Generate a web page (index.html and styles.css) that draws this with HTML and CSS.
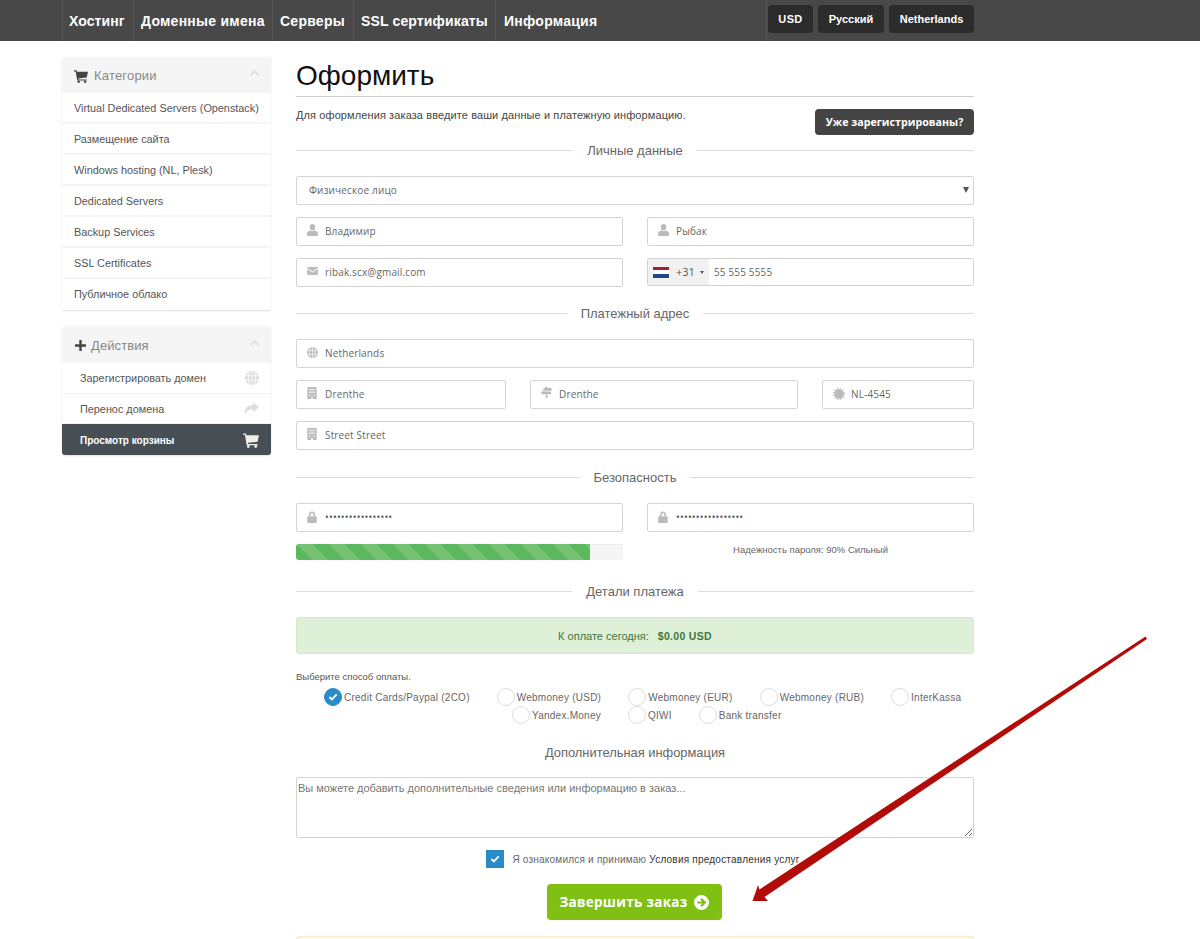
FILE: index.html
```html
<!DOCTYPE html>
<html lang="ru">
<head>
<meta charset="utf-8">
<title>Оформить</title>
<link rel="stylesheet" href="styles.css">
</head>
<body>
<svg class="defs" width="0" height="0">
  <symbol id="i-cart" viewBox="0 0 16 16"><path d="M0 1.5h2.9l.5 1.7H16l-1.5 6.6-9.6 1 .3 1.1H14.600v1.300H3.700L1.900 2.800H0z"/><circle cx="5.300" cy="14.500" r="1.400"/><circle cx="12.700" cy="14.500" r="1.400"/></symbol>
  <symbol id="i-plus" viewBox="0 0 12 12"><path d="M4.700 0h2.600v4.700H12v2.600H7.300V12H4.700V7.300H0V4.700h4.700z"/></symbol>
  <symbol id="i-chev" viewBox="0 0 14 9"><path d="M1.500 7.500L7 2l5.500 5.500" fill="none" stroke="currentColor" stroke-width="2.600"/></symbol>
  <symbol id="i-globe" viewBox="0 0 14 14"><circle cx="7" cy="7" r="7"/><path d="M0 4.700h14M0 9.300h14M7 0v14M4.500 .5C3 4.500 3 9.500 4.500 13.500M9.500 .5C11 4.500 11 9.500 9.500 13.500" fill="none" stroke="#fff" stroke-width=".8"/></symbol>
  <symbol id="i-share" viewBox="0 0 16 14"><path d="M9.500 0L16 5.500 9.500 11V7.800C5.500 7.800 2.500 9 1 14 -.5 7.500 3.500 3.500 9.500 3.300z"/></symbol>
  <symbol id="i-user" viewBox="0 0 12 13"><ellipse cx="6" cy="3.500" rx="3" ry="3.500"/><path d="M0 13v-2.500C0 8.300 2 7.500 3.500 7c1.500 1 3.500 1 5 0 1.500.5 3.500 1.300 3.500 3.500V13z"/></symbol>
  <symbol id="i-mail" viewBox="0 0 12 9"><path d="M0 0h12v1L6 5 0 1zM0 2.300L6 6.300l6-4V9H0z"/></symbol>
  <symbol id="i-build" viewBox="0 0 10 13"><path fill-rule="evenodd" d="M0 0h10v13H6v-2H4v2H0zM2 2v1.500h1.500V2zM4.300 2v1.500h1.500V2zM6.600 2v1.500H8V2zM2 5v1.500h1.500V5zM4.300 5v1.500h1.500V5zM6.600 5v1.500H8V5zM2 8v1.500h1.500V8zM6.600 8v1.500H8V8z"/></symbol>
  <symbol id="i-signs" viewBox="0 0 12 12"><path d="M5 0h2v1h4l1 1.500L11 4H1zM1 5h10v3H1L0 6.500zM5 8.500h2V12H5z"/></symbol>
  <symbol id="i-cert" viewBox="0 0 14 14"><circle cx="7" cy="7" r="5.500"/><circle cx="7" cy="7" r="6" fill="none" stroke="currentColor" stroke-width="2" stroke-dasharray="1.600 1.540"/></symbol>
  <symbol id="i-lock" viewBox="0 0 11 14"><path d="M3 6V4a2.500 2.500 0 015 0v2" fill="none" stroke="currentColor" stroke-width="1.800"/><rect y="6" width="11" height="8" rx="1"/></symbol>
  <symbol id="i-check" viewBox="0 0 12 10"><path d="M1.500 5L4.600 8l6-6.200" fill="none" stroke="#fff" stroke-width="2.200"/></symbol>
  <symbol id="i-next" viewBox="0 0 14 14"><path fill-rule="evenodd" d="M7 0a7 7 0 110 14A7 7 0 017 0zM7.300 2.800L5.900 4.200 7.700 6H3v2h4.700L5.900 9.800l1.400 1.400L11.500 7z"/></symbol>
</svg>

<header class="topbar">
  <nav class="topnav">
    <a class="nav-item nav-a">Хостинг</a>
    <a class="nav-item nav-b">Доменные имена</a>
    <a class="nav-item nav-c">Серверы</a>
    <a class="nav-item nav-d">SSL сертификаты</a>
    <a class="nav-item nav-e">Информация</a>
    <div class="nav-tools">
      <a class="tool tool-a">USD</a>
      <a class="tool tool-b">Русский</a>
      <a class="tool tool-c">Netherlands</a>
    </div>
  </nav>
</header>

<div class="page">
  <aside class="sidebar">
    <section class="panel panel-cats">
      <h3 class="panel-head"><svg class="ph-icon"><use href="#i-cart"/></svg><span>Категории</span><svg class="chev"><use href="#i-chev"/></svg></h3>
      <a class="cat">Virtual Dedicated Servers (Openstack)</a>
      <a class="cat">Размещение сайта</a>
      <a class="cat">Windows hosting (NL, Plesk)</a>
      <a class="cat">Dedicated Servers</a>
      <a class="cat">Backup Services</a>
      <a class="cat">SSL Certificates</a>
      <a class="cat cat-last">Публичное облако</a>
    </section>
    <section class="panel panel-acts">
      <h3 class="panel-head head-acts"><svg class="ph-plus"><use href="#i-plus"/></svg><span>Действия</span><svg class="chev"><use href="#i-chev"/></svg></h3>
      <a class="act">Зарегистрировать домен<svg class="act-icon"><use href="#i-globe"/></svg></a>
      <a class="act">Перенос домена<svg class="act-icon act-share"><use href="#i-share"/></svg></a>
      <a class="act act-on">Просмотр корзины<svg class="act-icon act-cart"><use href="#i-cart"/></svg></a>
    </section>
  </aside>

  <main class="main">
    <h1 class="title">Оформить</h1>
    <div class="intro">
      <p>Для оформления заказа введите ваши данные и платежную информацию.</p>
      <a class="btn-login">Уже зарегистрированы?</a>
    </div>

    <h4 class="sub sub-1"><span>Личные данные</span></h4>
    <div class="select-wrap">
      <select class="field field-select"><option>Физическое лицо</option></select>
    </div>
    <div class="row two">
      <label class="inp"><svg class="fi fi-user"><use href="#i-user"/></svg><input class="field" value="Владимир"></label>
      <label class="inp"><svg class="fi fi-user"><use href="#i-user"/></svg><input class="field" value="Рыбак"></label>
    </div>
    <div class="row two">
      <label class="inp"><svg class="fi fi-mail"><use href="#i-mail"/></svg><input class="field" value="ribak.scx@gmail.com"></label>
      <div class="phone">
        <div class="dial"><span class="flag"><i class="f-r"></i><i class="f-w"></i><i class="f-b"></i></span><span class="code">+31</span><span class="caret"></span></div>
        <input class="phone-input" value="55 555 5555">
      </div>
    </div>

    <h4 class="sub sub-2"><span>Платежный адрес</span></h4>
    <label class="inp"><svg class="fi fi-globe"><use href="#i-globe"/></svg><input class="field" value="Netherlands"></label>
    <div class="row three">
      <label class="inp"><svg class="fi fi-build"><use href="#i-build"/></svg><input class="field" value="Drenthe"></label>
      <label class="inp"><svg class="fi fi-signs"><use href="#i-signs"/></svg><input class="field" value="Drenthe"></label>
      <label class="inp"><svg class="fi fi-cert"><use href="#i-cert"/></svg><input class="field" value="NL-4545"></label>
    </div>
    <label class="inp row"><svg class="fi fi-build"><use href="#i-build"/></svg><input class="field" value="Street Street"></label>

    <h4 class="sub sub-3"><span>Безопасность</span></h4>
    <div class="row two">
      <label class="inp"><svg class="fi fi-lock"><use href="#i-lock"/></svg><input class="field pass" type="password" value="passwordpassword1"></label>
      <label class="inp"><svg class="fi fi-lock"><use href="#i-lock"/></svg><input class="field pass" type="password" value="passwordpassword1"></label>
    </div>
    <div class="row two strength">
      <div class="progress"><div class="bar" style="width:90%"></div></div>
      <p class="strength-text">Надежность пароля: 90% Сильный</p>
    </div>

    <h4 class="sub sub-4"><span>Детали платежа</span></h4>
    <div class="alert-pay">К оплате сегодня: <b>$0.00 USD</b></div>

    <p class="pay-label">Выберите способ оплаты.</p>
    <div class="pay-row pay-row-1">
      <label class="pay"><span class="radio radio-on"><svg class="radio-check"><use href="#i-check"/></svg></span>Credit Cards/Paypal (2CO)</label>
      <label class="pay"><span class="radio"></span>Webmoney (USD)</label>
      <label class="pay"><span class="radio"></span>Webmoney (EUR)</label>
      <label class="pay"><span class="radio"></span>Webmoney (RUB)</label>
      <label class="pay"><span class="radio"></span>InterKassa</label>
    </div>
    <div class="pay-row pay-row-2">
      <label class="pay"><span class="radio"></span>Yandex.Money</label>
      <label class="pay"><span class="radio"></span>QIWI</label>
      <label class="pay"><span class="radio"></span>Bank transfer</label>
    </div>

    <h4 class="extra">Дополнительная информация</h4>
    <textarea class="notes" placeholder="Вы можете добавить дополнительные сведения или информацию в заказ..."></textarea>

    <div class="tos">
      <span class="tick"><svg class="tick-check"><use href="#i-check"/></svg></span>
      <span>Я ознакомился и принимаю <a class="tos-link">Условия предоставления услуг</a></span>
    </div>
    <div class="finish"><a class="btn-finish">Завершить заказ<svg class="next"><use href="#i-next"/></svg></a></div>
    <div class="warn"></div>
  </main>
</div>

<svg class="annot" viewBox="0 0 1200 939" width="1200" height="939">
  <polygon points="1145.500,636.500 759.500,889.500 758,885 752.500,901 768,901 764.500,897 1147,639" fill="#b20c08"/>
</svg>
</body>
</html>
```
FILE: styles.css
```css
* { box-sizing: border-box; }
html, body { margin: 0; padding: 0; height: 939px; overflow: hidden; background: #fff; }
body { font-family: "Liberation Sans", Arial, sans-serif; color: #333; position: relative; }
.defs { position: absolute; }
svg { fill: currentColor; display: block; }

.topbar { height: 41px; background: #484848; }
.topnav { margin-left: 62px; width: 912px; height: 41px; display: flex; }
.nav-item { height: 41px; line-height: 42px; font-weight: 700; font-size: 14px; color: #fff; border-left: 1px solid #555; letter-spacing: .1px; white-space: nowrap; }
.nav-a { width: 71px; padding-left: 6px; }
.nav-b { width: 139px; padding-left: 7px; letter-spacing: .25px; }
.nav-c { width: 81px; padding-left: 7px; letter-spacing: .25px; }
.nav-d { width: 142px; padding-left: 7px; letter-spacing: .15px; }
.nav-e { padding-left: 8px; letter-spacing: .25px; }
.nav-tools { margin-left: auto; display: flex; gap: 5px; border-left: 1px solid #555; padding: 5px 0 0 1px; height: 41px; }
.tool { height: 28px; background: #2c2c2c; border-radius: 4px; color: #fff; font-weight: 700; font-size: 11px; line-height: 28px; text-align: center; }
.tool-a { width: 45px; letter-spacing: .4px; }
.tool-b { width: 66px; }
.tool-c { width: 85px; }

.page { display: flex; padding: 16px 0 0 62px; }
.sidebar { width: 209px; flex: none; margin-right: 25px; }
.panel { border-radius: 3px; box-shadow: 0 1px 2px rgba(0,0,0,.13); background: #fff; overflow: hidden; }
.panel-cats { height: 253px; }
.panel-acts { margin-top: 16px; height: 129px; }
.panel-head { margin: 0; height: 36px; background: #f5f5f5; display: flex; align-items: center; padding: 1px 11px 0 12px; font-weight: 400; font-size: 13px; color: #888; letter-spacing: .2px; }
.head-acts { height: 37px; letter-spacing: .1px; }
.ph-icon { width: 14px; height: 14px; color: #444; margin-right: 6px; }
.ph-plus { width: 11px; height: 11px; color: #444; margin-right: 5px; margin-left: 1px; }
.chev { width: 11px; height: 8px; color: #e0e0e0; margin-left: auto; margin-top: -5px; }
.cat { display: block; height: 31px; padding: 0 12px; line-height: 31px; font-size: 10.85px; color: #555; border-bottom: 2px solid #f4f4f4; white-space: nowrap; }
.cat-last { border-bottom: 0; }
.act { height: 31px; padding: 0 12px 0 18px; font-size: 10.85px; color: #555; display: flex; align-items: center; justify-content: space-between; border-bottom: 1px solid #f2f2f2; }
.act:nth-of-type(2) { height: 30px; }
.act-icon { width: 14px; height: 14px; color: #ddd; }
.act-share { height: 13px; width: 15px; }
.act-on { background: #484f54; color: #fff; font-weight: 700; border-bottom: 0; font-size: 10px; padding-top: 1px; }
.act-cart { color: #eee; width: 16px; height: 16px; }

.main { width: 678px; flex: none; font-size: 11px; margin-top: -1px; }
.title { margin: 0; height: 41px; border-bottom: 1px solid #ccc; font-family: "Liberation Sans", sans-serif; font-weight: 400; font-size: 28px; line-height: 40px; color: #111; }
.intro { display: flex; justify-content: space-between; align-items: flex-start; height: 38px; padding-top: 12px; }
.intro p { margin: 0; font-size: 11px; line-height: 13px; color: #444; letter-spacing: .1px; }
.btn-login { width: 159px; height: 26px; background: #444; color: #fff; border-radius: 4px; font-family: "Open Sans", sans-serif; font-weight: 700; font-size: 10.7px; line-height: 26px; text-align: center; }

.sub { margin: 0; display: flex; align-items: center; font-weight: 400; font-size: 13px; color: #666; height: 15px; }
.sub::before, .sub::after { content: ""; flex: 1; height: 1px; background: #ddd; }
.sub span { padding: 0 14px; }
.sub-1 { margin-top: 8px; margin-bottom: 18px; }
.sub-2 { margin-top: 19px; margin-bottom: 18px; }
.sub-3 { margin-top: 20px; margin-bottom: 18px; }
.sub-4 { margin-top: 24px; margin-bottom: 18px; }

.row { display: grid; gap: 24px; margin-top: 12px; }
.row.inp { display: block; }
.two { grid-template-columns: 1fr 1fr; }
.three { grid-template-columns: 210fr 268fr 152fr; }
.inp { position: relative; display: block; height: 29px; }
.field { display: block; width: 100%; height: 29px; border: 1px solid #d4d4d4; border-radius: 2px; padding: 0 6px 1px 28px; background: #fff; font-family: "Open Sans", sans-serif; font-size: 10px; letter-spacing: .15px; color: #666; outline: 0; }
.field-select { appearance: none; -webkit-appearance: none; padding-left: 12px; }
.select-wrap { position: relative; }
.select-wrap::after { content: ""; position: absolute; right: 5px; top: 11px; border-left: 3px solid transparent; border-right: 3px solid transparent; border-top: 6px solid #555; }
.pass { color: #555; font-size: 10px; letter-spacing: .2px; }
.fi { position: absolute; top: 8px; left: 11px; color: #bbb; }
.fi-user { width: 11px; height: 12px; top: 7px; }
.fi-mail { width: 11px; height: 8px; top: 9px; }
.fi-globe { width: 11px; height: 11px; top: 8px; }
.fi-build { width: 10px; height: 12px; left: 11px; top: 7px; }
.fi-signs { width: 11px; height: 11px; top: 7px; }
.fi-cert { width: 12px; height: 12px; }
.fi-lock { width: 10px; height: 12px; top: 8px; }

.phone { display: flex; height: 28px; border: 1px solid #d4d4d4; border-radius: 2px; overflow: hidden; }
.dial { width: 61px; background: #f1f1f1; display: flex; align-items: center; padding: 0 5px; flex: none; }
.flag { width: 16px; height: 11px; display: flex; flex-direction: column; margin-right: 7px; }
.flag i { display: block; flex: 1; }
.f-r { background: #ae1c28; } .f-w { background: #fff; } .f-b { background: #21468b; }
.code { font-family: "Open Sans", sans-serif; font-size: 11px; color: #555; margin-top: -2px; }
.caret { margin-left: 5px; border-left: 2.500px solid transparent; border-right: 2.500px solid transparent; border-top: 3px solid #555; }
.phone-input { flex: 1; min-width: 0; border: 0; outline: 0; padding: 0 5px; font-family: "Open Sans", sans-serif; font-size: 10px; letter-spacing: .15px; color: #666; }

.strength { height: 16px; }
.progress { height: 16px; background: #f5f5f5; border-radius: 3px; overflow: hidden; box-shadow: inset 0 1px 1px rgba(0,0,0,.05); }
.bar { height: 16px; background-color: #5cb85c; background-image: linear-gradient(45deg, rgba(255,255,255,.15) 25%, transparent 25%, transparent 50%, rgba(255,255,255,.15) 50%, rgba(255,255,255,.15) 75%, transparent 75%); background-size: 32px 32px; }
.strength-text { margin: 0; font-size: 9.5px; color: #666; text-align: center; line-height: 11px; }

.alert-pay { height: 37px; background: #dff0d8; border: 1px solid #d6e9c6; border-radius: 3px; color: #3c763d; text-align: center; line-height: 36px; font-size: 11px; }
.alert-pay b { margin-left: 6px; font-size: 10.5px; letter-spacing: .3px; }
.pay-label { margin: 17px 0 0; font-size: 9.5px; line-height: 11px; color: #555; }
.pay-row { display: flex; gap: 27px; font-size: 10px; color: #666; letter-spacing: .25px; }
.pay-row-1 { padding-left: 28px; margin-top: 6px; height: 18px; }
.pay-row-2 { padding-left: 216px; height: 18px; }
.pay { display: flex; align-items: center; gap: 2px; white-space: nowrap; }
.radio { width: 18px; height: 18px; border: 1px solid #ddd; border-radius: 50%; display: block; flex: none; }
.radio-on { background: #2a8bc9; border-color: #2a8bc9; padding: 4px 3px; }
.radio-check { width: 10px; height: 8px; }

.extra { margin: 21px 0 0; height: 32px; font-weight: 400; font-size: 12.9px; line-height: 16px; color: #666; text-align: center; }
.notes { display: block; width: 100%; height: 61px; border: 1px solid #d4d4d4; border-radius: 2px; padding: 4px 1px; font-family: "Liberation Sans", sans-serif; font-size: 11px; color: #666; margin: 0; }
.notes::placeholder { color: #777; opacity: 1; }

.tos { display: flex; align-items: center; justify-content: center; gap: 8px; margin-top: 12px; height: 18px; font-size: 10px; letter-spacing: .22px; color: #666; padding-left: 16px; }
.tick { width: 18px; height: 18px; background: #2a8bc9; padding: 5px 4px; display: block; }
.tick-check { width: 10px; height: 8px; }
.tos-link { color: #333; }
.finish { display: flex; justify-content: center; margin-top: 16px; padding-right: 2px; }
.btn-finish { width: 175px; height: 36px; background: #7fc013; color: #fff; border-radius: 4px; display: flex; align-items: center; justify-content: center; gap: 6px; font-family: "Open Sans", sans-serif; font-weight: 700; font-size: 13.5px; letter-spacing: .3px; }
.next { width: 15px; height: 15px; }
.warn { margin-top: 16px; height: 40px; background: #fcf8e3; border: 1px solid #faebcc; border-radius: 3px; }

.annot { position: absolute; left: 0; top: 0; pointer-events: none; }
```
